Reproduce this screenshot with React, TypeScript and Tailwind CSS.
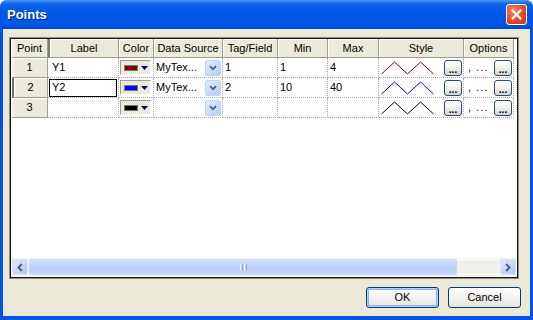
import React from "react";

type Row = {
  n: string;
  label: string;
  sw: string;
  stroke: string;
  ds: string;
  tag: string;
  min: string;
  max: string;
};

const rows: Row[] = [
  { n: "1", label: "Y1", sw: "bg-[#800000]", stroke: "#800000", ds: "MyTex...", tag: "1", min: "1", max: "4" },
  { n: "2", label: "Y2", sw: "bg-[#0000ff]", stroke: "#0000ff", ds: "MyTex...", tag: "2", min: "10", max: "40" },
  { n: "3", label: "", sw: "bg-black", stroke: "#000000", ds: "", tag: "", min: "", max: "" },
];

const heads = [
  { name: "Point", w: "w-[36px]" },
  { name: "Label", w: "w-[71px]" },
  { name: "Color", w: "w-[35px]" },
  { name: "Data Source", w: "w-[69px]" },
  { name: "Tag/Field", w: "w-[55px]" },
  { name: "Min", w: "w-[50px]" },
  { name: "Max", w: "w-[51px]" },
  { name: "Style", w: "w-[85px]" },
  { name: "Options", w: "w-[50px]" },
];

const cell = "h-[20px] shrink-0 border-r border-b border-dotted border-[#a9a9a9] flex items-center overflow-hidden";

function ComboBtn() {
  return (
    <div className="w-[16px] h-[16px] rounded-[2px] border border-[#c3d3f8] bg-gradient-to-br from-[#e6edfd] to-[#b6c9f6] flex items-center justify-center">
      <svg width="8" height="6" viewBox="0 0 8 6">
        <path d="M1 1.2 L4 4.2 L7 1.2" fill="none" stroke="#4d6185" strokeWidth="1.8" />
      </svg>
    </div>
  );
}

function DotsBtn() {
  return (
    <div className="w-[18px] h-[16px] shrink-0 rounded-[3px] border border-[#2a4a78] bg-gradient-to-b from-white via-[#f1f0ea] to-[#d6d4ca] flex items-end justify-center text-[10px] font-bold leading-[9px] text-black pb-[1px]">
      ...
    </div>
  );
}

function ColorPick({ sw }: { sw: string }) {
  return (
    <div className="w-[31px] h-[15px] border border-t-[#9a9a9a] border-l-[#9a9a9a] border-b-white border-r-white bg-[#ece9d8] flex items-center pl-[3px] gap-[3px]">
      <div className={`w-[14px] h-[6px] border border-[#7a7a7a] ${sw}`} />
      <svg width="7" height="4" viewBox="0 0 7 4">
        <path d="M0 0 H7 L3.5 4Z" fill="#000080" />
      </svg>
    </div>
  );
}

function ScrollBtn({ dir }: { dir: "l" | "r" }) {
  return (
    <div className="w-[16px] h-[16px] shrink-0 rounded-[2px] border border-[#dce5fb] bg-gradient-to-br from-[#dfe8fd] to-[#b3c6f4] flex items-center justify-center">
      <svg width="6" height="9" viewBox="0 0 6 9">
        <path
          d={dir === "l" ? "M4.8 1 L1.5 4.5 L4.8 8" : "M1.2 1 L4.5 4.5 L1.2 8"}
          fill="none"
          stroke="#4d6185"
          strokeWidth="1.9"
        />
      </svg>
    </div>
  );
}

export default function App() {
  return (
    <div className="w-[533px] h-[320px] flex flex-col bg-[#0055e5] rounded-t-[7px] overflow-hidden font-[family-name:'Liberation_Sans',Arial,sans-serif] text-black">
      {/* title bar */}
      <div className="h-[29px] shrink-0 flex items-center justify-between pl-[7px] pr-[6px] bg-[linear-gradient(to_bottom,#4c9aff_0%,#0c63e6_14%,#0057e8_45%,#0056e6_80%,#0049d6_100%)]">
        <span className="text-white font-bold text-[13px] [text-shadow:1px_1px_0_#0a2a8a]">Points</span>
        <div className="w-[21px] h-[21px] rounded-[3px] border border-white bg-[radial-gradient(circle_at_35%_30%,#f08a6a,#e0482a_55%,#c2361c)] flex items-center justify-center">
          <svg width="11" height="11" viewBox="0 0 11 11">
            <path d="M1.5 1.5 L9.5 9.5 M9.5 1.5 L1.5 9.5" stroke="white" strokeWidth="2.2" strokeLinecap="square" />
          </svg>
        </div>
      </div>

      {/* body */}
      <div className="flex-1 mx-[3px] mb-[4px] bg-[#ece9d8] flex flex-col pt-[8px]">
        <div className="ml-[6px] w-[510px] h-[242px] border border-[#8c8c8c]">
          <div className="w-full h-full border border-[#1a1a1a] bg-white flex flex-col">
            <div className="flex-1 pl-[1px]">
              {/* header */}
              <div className="flex">
                {heads.map((h, i) => (
                  <div
                    key={h.name}
                    className={`${h.w} h-[19px] shrink-0 flex items-center justify-center text-[11px] bg-[#ebeadb] border-r border-b border-[#9d9c93] shadow-[inset_1px_1px_0_#ffffff] ${i === 1 ? "border-l-2 border-l-[#7a7a72]" : ""}`}
                  >
                    {h.name}
                  </div>
                ))}
              </div>
              {rows.map((r) => (
                <div key={r.n} className="flex text-[11px]">
                  <div
                    className={`w-[36px] h-[20px] shrink-0 flex items-center justify-center bg-[#ebeadb] border-r border-b border-[#9d9c93] shadow-[inset_1px_1px_0_#ffffff] ${r.n === "2" ? "border-l-2 border-l-[#6f6f68]" : ""}`}
                  >
                    {r.n}
                  </div>
                  <div className={`w-[71px] ${cell} px-[1px]`}>
                    {r.n === "2" ? (
                      <div className="w-full h-[18px] border border-black flex items-center pl-[2px]">{r.label}</div>
                    ) : (
                      <span className="pl-[3px]">{r.label}</span>
                    )}
                  </div>
                  <div className={`w-[35px] ${cell} pl-[1px]`}>
                    <ColorPick sw={r.sw} />
                  </div>
                  <div className={`w-[69px] ${cell} justify-between pl-[2px] pr-[1px]`}>
                    <span>{r.ds}</span>
                    <ComboBtn />
                  </div>
                  <div className={`w-[55px] ${cell} pl-[2px]`}>{r.tag}</div>
                  <div className={`w-[50px] ${cell} pl-[2px]`}>{r.min}</div>
                  <div className={`w-[51px] ${cell} pl-[2px]`}>{r.max}</div>
                  <div className={`w-[85px] ${cell} pl-[1px] pr-[1px] justify-between`}>
                    <svg width="56" height="20" viewBox="0 0 56 20">
                      <polyline points="1.5,16 14.5,4 27.5,16 40.5,4 53.5,16" fill="none" stroke={r.stroke} strokeWidth="1" />
                    </svg>
                    <DotsBtn />
                  </div>
                  <div className={`w-[50px] ${cell} pl-[4px] pr-[1px] justify-between`}>
                    <span className="tracking-[1px]">, ...</span>
                    <DotsBtn />
                  </div>
                </div>
              ))}
            </div>

            {/* horizontal scrollbar */}
            <div className="h-[19px] shrink-0 flex items-center px-[1px] pb-[1px] gap-[1px] bg-[#f4f3ee]">
              <ScrollBtn dir="l" />
              <div className="flex-1 h-[16px] flex">
                <div className="w-[428px] h-full rounded-[2px] border border-[#c9d7fa] bg-[linear-gradient(to_bottom,#d2defc_0%,#c4d4fb_40%,#bccdfa_70%,#c8d8fb_100%)] flex items-center justify-center">
                  <div className="flex gap-[1px]">
                    <div className="w-[1px] h-[7px] bg-[#eef3fe]" />
                    <div className="w-[1px] h-[7px] bg-[#8fa8e4]" />
                    <div className="w-[1px] h-[7px] bg-[#eef3fe]" />
                    <div className="w-[1px] h-[7px] bg-[#8fa8e4]" />
                  </div>
                </div>
                <div className="flex-1 h-full bg-[#f0efe8] border-y border-white" />
              </div>
              <ScrollBtn dir="r" />
            </div>
          </div>
        </div>

        {/* buttons */}
        <div className="flex justify-end gap-[9px] mt-[8px] pr-[9px]">
          <button className="w-[73px] h-[21px] rounded-[3px] border border-[#003c74] bg-gradient-to-b from-white to-[#e6e5de] text-[11px] shadow-[inset_0_0_0_1px_#b8d0f7,inset_0_0_0_2px_#8cb0f0]">
            OK
          </button>
          <button className="w-[73px] h-[21px] rounded-[3px] border border-[#003c74] bg-gradient-to-b from-white to-[#e6e5de] text-[11px]">
            Cancel
          </button>
        </div>
      </div>
    </div>
  );
}
